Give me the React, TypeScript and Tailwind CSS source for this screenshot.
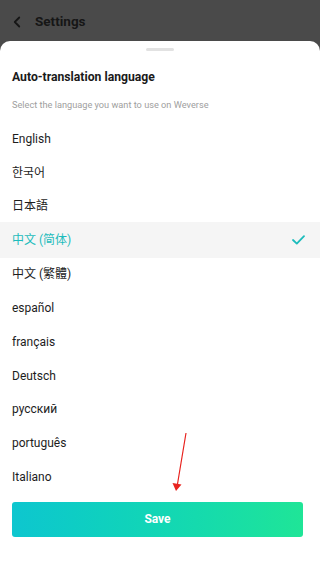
import { ChevronLeft } from 'lucide-react'

const languages = [
  'English',
  '한국어',
  '日本語',
  '中文 (简体)',
  '中文 (繁體)',
  'español',
  'français',
  'Deutsch',
  'русский',
  'português',
  'Italiano',
]

const selected = '中文 (简体)'

function LanguageRow({ name, active }: { name: string; active: boolean }) {
  if (active) {
    return (
      <div className="h-[36px] -my-px flex items-center justify-between px-3 bg-[#f5f5f5]">
        <span className="text-[12px] text-[#1cbcbc]">{name}</span>
        <svg width="13" height="10" viewBox="0 0 13 10" fill="none" className="mr-[3px]">
          <path d="M1 5 L4.8 8.6 L12 1.2" stroke="#1cbcbc" strokeWidth="1.8" strokeLinecap="round" strokeLinejoin="round" />
        </svg>
      </div>
    )
  }
  return (
    <div className="h-[33.8px] flex items-center px-3">
      <span className="text-[12px] text-[#1d1d1d]">{name}</span>
    </div>
  )
}

export default function App() {
  return (
    <div
      className="relative w-[320px] h-[568px] overflow-hidden bg-[#4a4a4a]"
      style={{ fontFamily: 'Roboto, "Noto Sans CJK SC", "Noto Sans CJK KR", sans-serif' }}
    >
      <header className="h-[41px] flex items-center pl-[8px] pt-[2px] gap-[9px]">
        <ChevronLeft size={18} strokeWidth={2.4} className="text-[#161616]" />
        <span className="text-[13.5px] font-bold text-[#161616]">Settings</span>
      </header>

      <div className="bg-white rounded-t-[10px] h-[527px] flex flex-col">
        <div className="flex justify-center pt-[7px]">
          <div className="w-[28px] h-[3px] rounded-full bg-[#e2e2e2]" />
        </div>
        <h1 className="px-3 mt-[17px] text-[12.2px] font-bold text-[#1a1a1a] leading-[18px]">
          Auto-translation language
        </h1>
        <p className="px-3 mt-[13px] text-[9.2px] text-[#a0a0a0] leading-[12px]">
          Select the language you want to use on Weverse
        </p>
        <div className="mt-[11px] flex flex-col">
          {languages.map((name) => (
            <LanguageRow key={name} name={name} active={name === selected} />
          ))}
        </div>
        <div className="px-3 mt-[8px]">
          <button className="w-[291px] h-[35px] rounded-[3px] bg-gradient-to-r from-[#0ec6cf] to-[#1fe597] text-white text-[12px] font-bold">
            Save
          </button>
        </div>
      </div>

      <svg className="absolute left-0 top-0 pointer-events-none" width="320" height="568">
        <line x1="186" y1="433" x2="177.5" y2="484" stroke="#e8231f" strokeWidth="1.2" />
        <polygon points="172.5,483 181.5,484.5 176,491" fill="#e8231f" />
      </svg>
    </div>
  )
}
